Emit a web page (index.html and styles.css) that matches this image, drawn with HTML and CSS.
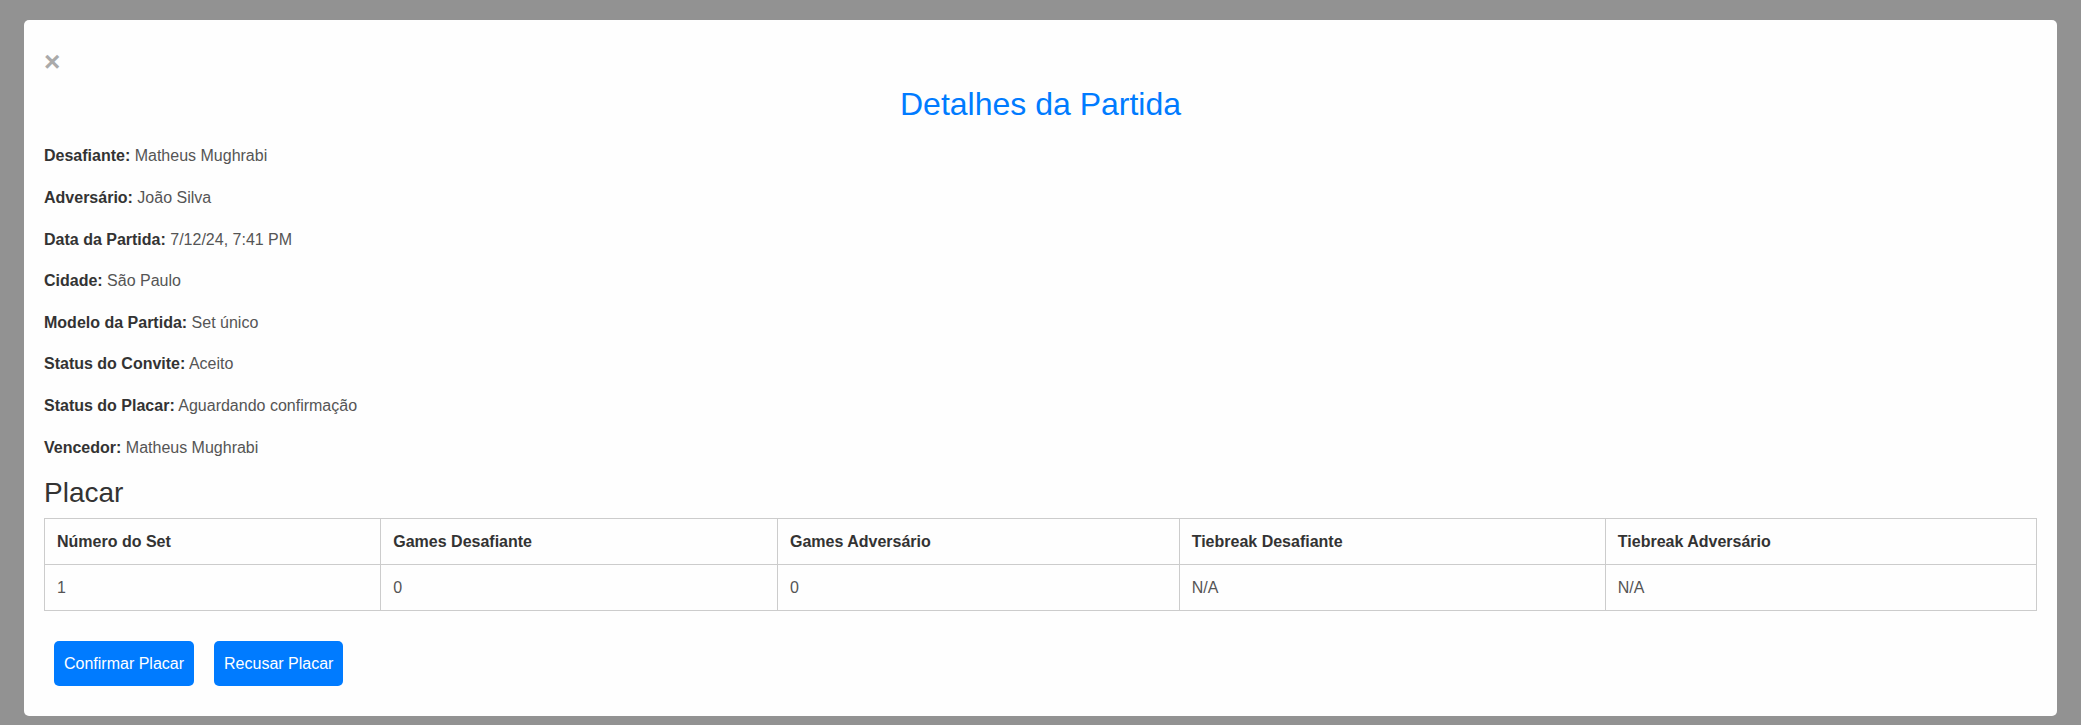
FILE: index.html
```html
<!DOCTYPE html>
<html lang="pt-BR">
<head>
<meta charset="utf-8">
<title>Detalhes da Partida</title>
<link rel="stylesheet" href="styles.css">
</head>
<body>
<div class="overlay">
  <div class="modal">
    <span class="close">&times;</span>
    <h2 class="title">Detalhes da Partida</h2>
    <p><strong>Desafiante:</strong> Matheus Mughrabi</p>
    <p><strong>Adversário:</strong> João Silva</p>
    <p><strong>Data da Partida:</strong> 7/12/24, 7:41 PM</p>
    <p><strong>Cidade:</strong> São Paulo</p>
    <p><strong>Modelo da Partida:</strong> Set único</p>
    <p><strong>Status do Convite:</strong> Aceito</p>
    <p><strong>Status do Placar:</strong> Aguardando confirmação</p>
    <p><strong>Vencedor:</strong> Matheus Mughrabi</p>
    <h3 class="section">Placar</h3>
    <table class="score">
      <thead>
        <tr>
          <th>Número do Set</th>
          <th>Games Desafiante</th>
          <th>Games Adversário</th>
          <th>Tiebreak Desafiante</th>
          <th>Tiebreak Adversário</th>
        </tr>
      </thead>
      <tbody>
        <tr>
          <td>1</td>
          <td>0</td>
          <td>0</td>
          <td>N/A</td>
          <td>N/A</td>
        </tr>
      </tbody>
    </table>
    <div class="actions">
      <button class="btn">Confirmar Placar</button>
      <button class="btn">Recusar Placar</button>
    </div>
  </div>
</div>
</body>
</html>
```
FILE: styles.css
```css
html, body {
  margin: 0;
  padding: 0;
}
body {
  background: #929292;
  font-family: "Liberation Sans", Arial, Helvetica, sans-serif;
  font-size: 16px;
  color: #333;
  height: 725px;
  overflow: hidden;
}
.overlay {
  padding: 20px 24px;
}
.modal {
  background: #fefefe;
  border-radius: 5px;
  padding: 20px;
}
.close {
  display: block;
  color: #aaa;
  font-size: 28px;
  font-weight: bold;
  line-height: 43px;
  height: 45px;
}
.title {
  margin: 0 0 20px;
  font-size: 32px;
  font-weight: normal;
  line-height: 1.2;
  color: #007bff;
  text-align: center;
}
.modal p {
  margin: 16px 0;
  line-height: 1.6;
  color: #555;
}
.modal p strong {
  color: #333;
}
.section {
  margin: 0 0 8px;
  font-size: 28px;
  font-weight: normal;
  line-height: 1.2;
  color: #333;
}
.score {
  width: 100%;
  border-collapse: collapse;
}
.score th,
.score td {
  border: 1px solid #ccc;
  padding: 12px;
  line-height: 21px;
  text-align: left;
  font-size: 16px;
}
.score th {
  font-weight: bold;
  color: #333;
}
.score td {
  color: #555;
}
.actions {
  margin-top: 20px;
  display: flex;
}
.btn {
  margin: 10px;
  padding: 10px;
  background: #007bff;
  color: #fff;
  border: none;
  border-radius: 5px;
  font-family: "Liberation Sans", Arial, Helvetica, sans-serif;
  font-size: 16px;
  line-height: 25px;
  cursor: pointer;
}
```
